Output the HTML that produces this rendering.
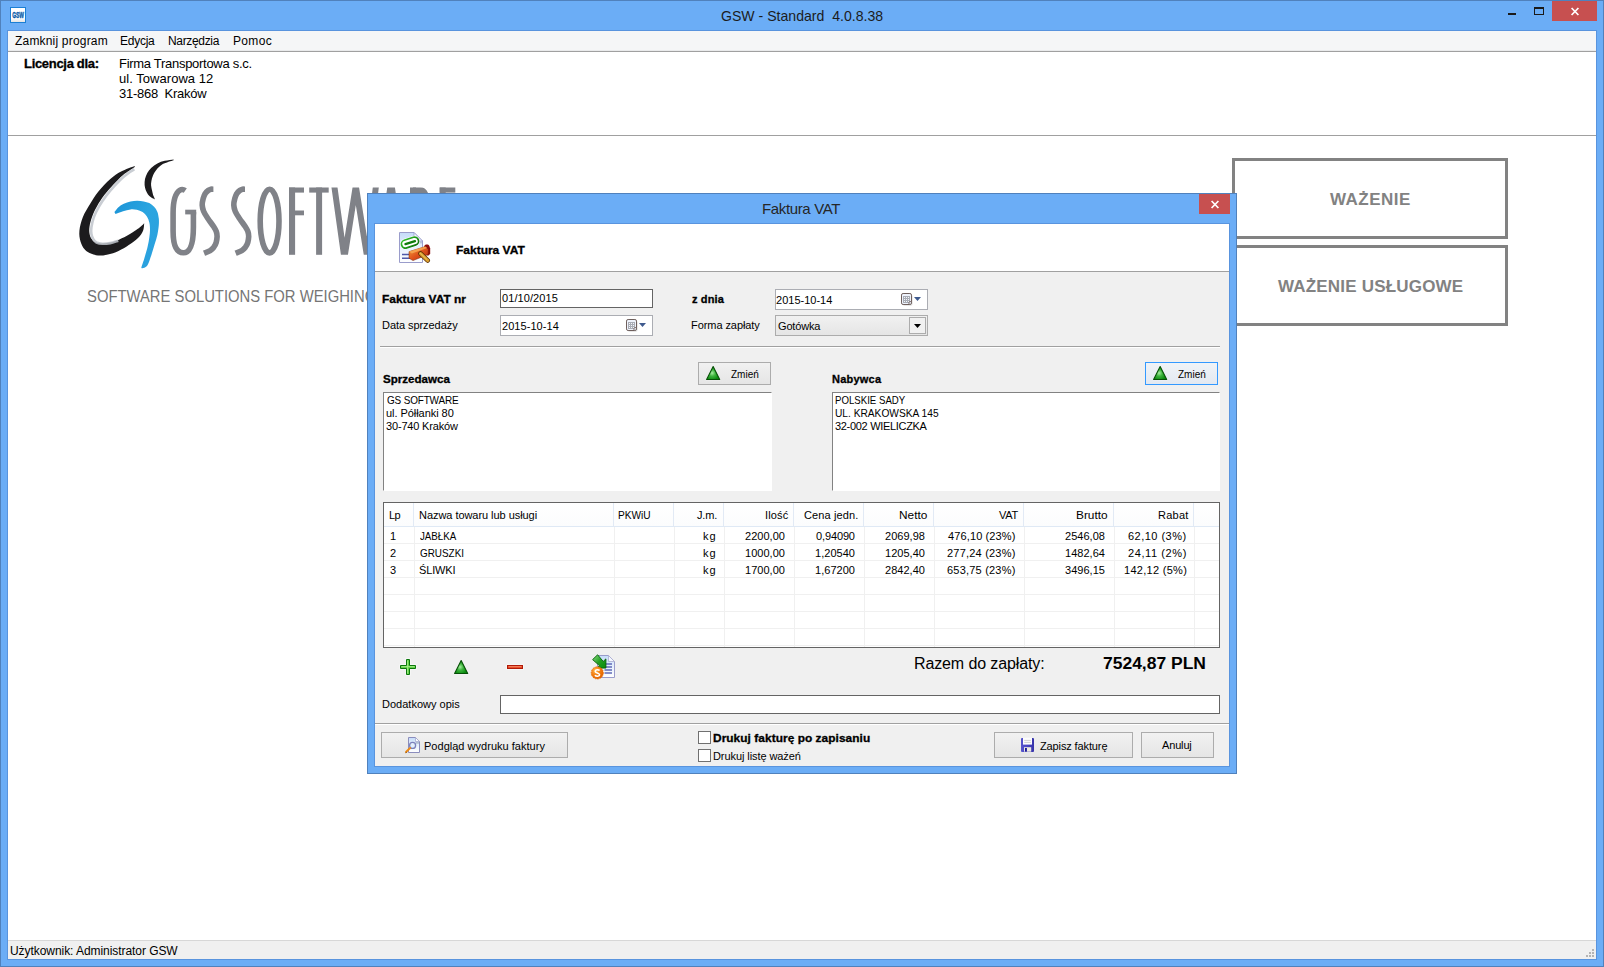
<!DOCTYPE html>
<html>
<head>
<meta charset="utf-8">
<title>GSW - Standard 4.0.8.38</title>
<style>
*{box-sizing:border-box;margin:0;padding:0}
html,body{width:1604px;height:967px;overflow:hidden}
body{position:relative;background:#6badf6;font-family:"Liberation Sans",sans-serif;font-size:11px;color:#000}
.a{position:absolute}
.t{position:absolute;white-space:nowrap}
svg{position:absolute;overflow:visible}
.inp{background:#fff;border:1px solid #abadb3}
.dk{background:#fff;border:1px solid #646464}
.btn{border:1px solid #acacac;background:linear-gradient(#f1f1f1,#e5e5e5)}
.sunk{background:#fff;border:1px solid #fff;border-top-color:#828282;border-left-color:#828282}
.cb{width:13px;height:13px;background:#fff;border:1px solid #707070}
.hl{height:2px;border-top:1px solid #a0a0a0;border-bottom:1px solid #fff}
.vl{width:1px;background:#f0f0f0}
.rl{height:1px;background:#f0f0f0}
</style>
</head>
<body>

<!-- main window frame -->
<div class="a" style="left:0;top:0;width:1604px;height:967px;border:1px solid #5081bc"></div>
<div class="a" style="left:7px;top:30px;width:1590px;height:930px;background:#5994de"></div>
<div class="a" style="left:8px;top:31px;width:1588px;height:928px;background:#fff"></div>
<!-- app icon -->
<div class="a" style="left:10px;top:7px;width:16px;height:16px;background:linear-gradient(#fff 70%,#e4e4e4);border:1px solid #1b7fd4"></div>
<svg style="left:10px;top:7px" width="16" height="16" viewBox="0 0 16 16"><text x="2.2" y="11" font-family="Liberation Sans" font-weight="bold" font-size="8.8" fill="#0a5ba8" stroke="#0a5ba8" stroke-width=".4" textLength="11.8" lengthAdjust="spacingAndGlyphs">GSW</text></svg>
<!-- caption buttons -->
<div class="a" style="left:1508px;top:13px;width:8px;height:2px;background:#1a1a1a"></div>
<div class="a" style="left:1534px;top:7px;width:10px;height:8px;border:1px solid #1a1a1a;border-top-width:2px"></div>
<div class="a" style="left:1552px;top:1px;width:45px;height:20px;background:#c75050"></div>
<svg style="left:1571px;top:8px" width="8" height="7" viewBox="0 0 8 7"><path d="M0.6 0L7.4 7M7.4 0L0.6 7" stroke="#fff" stroke-width="1.7" fill="none"/></svg>
<!-- menu -->
<div class="a" style="left:8px;top:31px;width:1588px;height:21px;background:#f5f6f7;border-bottom:1px solid #a0a0a0"></div>
<div class="a" style="left:8px;top:50px;width:1588px;height:1px;background:#e9eaeb"></div>
<!-- licence panel bottom line -->
<div class="a" style="left:8px;top:135px;width:1588px;height:1px;background:#a0a0a0"></div>
<!-- status bar -->
<div class="a" style="left:8px;top:940px;width:1588px;height:19px;background:#f0f0f0;border-top:1px solid #d7d7d7"></div>
<svg style="left:1586px;top:949px" width="9" height="9" viewBox="0 0 9 9" fill="#b4b4b4"><rect x="6" y="0" width="2" height="2"/><rect x="3" y="3" width="2" height="2"/><rect x="6" y="3" width="2" height="2"/><rect x="0" y="6" width="2" height="2"/><rect x="3" y="6" width="2" height="2"/><rect x="6" y="6" width="2" height="2"/></svg>
<!-- big buttons -->
<div class="a" style="left:1232px;top:158px;width:276px;height:81px;border:3px solid #828282;background:#fff"></div>
<div class="a" style="left:1232px;top:245px;width:276px;height:81px;border:3px solid #828282;background:#fff"></div>

<svg style="left:0;top:0" width="480" height="290" viewBox="0 0 480 290">
<defs><linearGradient id="lb" x1="0" y1="0" x2="1" y2="1"><stop offset="0" stop-color="#1b93d6"/><stop offset=".45" stop-color="#2ba5e0"/><stop offset="1" stop-color="#2a9fdd"/></linearGradient><clipPath id="lc"><rect x="160" y="186.6" width="320" height="69"/></clipPath></defs>
<path d="M134.6 165.9C132.3 166.8 125.1 169.3 121.1 171.5C117.1 173.7 114.2 175.6 110.3 178.9C106.5 182.3 101.6 187.5 98.2 191.7C94.9 195.8 92.7 199.5 90.2 203.8C87.6 208.1 84.6 212.8 82.8 217.2C81.0 221.7 79.8 226.7 79.4 230.7C79.0 234.7 79.6 238.3 80.5 241.4C81.4 244.6 83.0 247.5 84.8 249.5C86.6 251.6 88.8 252.8 91.5 253.8C94.2 254.8 97.3 255.7 100.9 255.6C104.5 255.5 109.2 254.5 113.0 253.3C116.8 252.0 120.4 250.0 123.8 248.2C127.2 246.3 130.5 244.1 133.2 242.1C135.9 240.1 138.2 238.1 139.9 236.1C141.6 234.1 142.6 232.1 143.3 230.0C144.0 227.9 144.1 224.4 144.2 223.3L143.7 223.7C143.1 224.3 141.5 226.1 139.9 227.3C138.4 228.6 136.8 229.6 134.6 231.1C132.3 232.5 129.4 234.5 126.5 236.1C123.6 237.6 120.0 239.3 117.1 240.4C114.2 241.5 111.7 242.3 109.0 242.8C106.3 243.3 103.3 243.6 100.9 243.5C98.6 243.4 96.4 242.9 94.9 242.1C93.3 241.3 92.4 240.2 91.5 238.8C90.6 237.3 89.8 235.4 89.5 233.4C89.2 231.4 89.1 229.5 89.5 226.7C89.9 223.9 91.0 219.9 92.2 216.6C93.4 213.2 94.9 210.1 96.9 206.5C98.9 202.9 101.6 198.6 104.3 195.1C107.0 191.5 109.9 188.3 113.0 185.0C116.2 181.6 119.5 177.9 123.1 174.9C126.8 171.9 132.9 168.3 134.8 166.9Z" fill="#1c1b1d"/>
<path d="M134.4 169.2C132.7 170.0 127.6 173.3 124.3 176.2C121.0 179.0 117.6 182.5 114.5 185.8C111.4 189.2 108.6 192.5 105.9 196.1C103.2 199.6 100.5 203.8 98.5 207.4C96.5 210.9 95.0 214.1 93.8 217.4C92.6 220.8 91.8 224.5 91.4 227.3C91.0 230.0 91.1 232.0 91.4 234.0C91.7 236.0 92.4 237.7 93.3 239.1C94.1 240.5 95.0 241.7 96.5 242.5C98.0 243.2 100.1 243.7 102.4 243.8C104.7 243.9 107.6 243.6 110.2 243.1C112.8 242.6 116.9 241.1 118.3 240.7" fill="none" stroke="#bfc4cb" stroke-width="2.6" opacity=".85"/>
<path d="M173.6 159.4C172.1 159.6 167.5 160.1 164.8 160.8C162.1 161.4 159.7 162.3 157.4 163.4C155.2 164.6 153.0 166.2 151.4 167.8C149.7 169.3 148.4 171.0 147.3 172.9C146.3 174.7 145.5 176.9 145.0 178.9C144.6 180.9 144.5 183.1 144.6 185.0C144.7 186.8 145.2 188.5 145.7 190.1C146.3 191.6 147.1 193.2 148.0 194.4C148.9 195.6 149.8 196.5 151.0 197.3C152.1 198.2 154.3 199.0 155.0 199.4L154.7 198.7C154.5 198.1 153.6 196.4 153.1 195.1C152.7 193.7 152.4 191.9 152.0 190.3C151.7 188.8 151.2 187.2 151.1 185.6C151.0 184.1 151.0 182.6 151.4 180.9C151.7 179.2 152.2 177.3 153.0 175.6C153.8 173.8 154.4 172.1 156.1 170.2C157.7 168.3 159.9 165.8 162.8 164.1C165.7 162.5 171.8 160.9 173.6 160.2Z" fill="#1c1b1d"/>
<path d="M114.4 212.1C115.1 211.3 116.8 208.5 118.4 207.2C120.0 205.8 121.8 204.7 123.8 203.8C125.8 202.9 128.3 202.1 130.5 201.6C132.8 201.1 135.0 200.9 137.2 200.8C139.4 200.8 141.7 201.0 143.7 201.4C145.7 201.8 147.6 202.2 149.3 203.1C151.1 204.0 152.7 205.3 154.1 206.8C155.4 208.2 156.6 209.9 157.4 211.9C158.2 213.8 158.5 216.3 158.8 218.6C159.0 220.8 159.0 222.6 158.8 225.3C158.5 228.0 158.1 231.6 157.4 234.7C156.7 237.9 155.7 240.8 154.7 244.1C153.7 247.5 152.5 251.5 151.4 254.9C150.2 258.3 149.0 262.2 148.0 264.3C147.0 266.4 146.4 266.6 145.3 267.3C144.3 267.9 142.3 268.2 141.7 268.3L141.3 267.8C141.6 266.8 142.6 263.8 143.3 261.6C144.0 259.5 144.6 257.5 145.3 254.9C146.0 252.3 147.1 249.1 147.7 246.2C148.4 243.2 149.0 240.1 149.3 237.4C149.7 234.7 150.0 232.5 150.0 230.0C150.0 227.6 149.9 224.9 149.3 222.6C148.8 220.4 148.0 218.3 146.9 216.6C145.8 214.8 144.3 213.3 142.6 212.1C140.9 211.0 138.9 210.3 136.8 209.8C134.8 209.4 132.8 209.2 130.5 209.4C128.2 209.7 125.6 210.4 123.1 211.2C120.6 212.0 116.7 213.5 115.5 214.0Z" fill="url(#lb)"/>
<g fill="none" stroke="#808288" stroke-width="5.6"><path d="M185.3 190.5C183.6 189.4 181.4 189.2 179.8 190.3C176 192.8 173.1 200 173.1 213V231C173.1 246 177 252.8 183.4 252.8C190 252.8 193.4 244.5 193.4 227V212.1M213.4 189.3C213.0 189.3 211.8 189.0 211.0 189.2C210.2 189.4 209.3 189.7 208.3 190.4C207.3 191.1 206.0 192.2 205.2 193.6C204.3 194.9 203.7 196.6 203.2 198.5C202.7 200.4 202.1 202.9 202.2 205.0C202.3 207.1 202.7 209.0 203.6 211.2C204.5 213.4 206.0 215.6 207.7 218.2C209.4 220.8 212.2 224.4 213.6 226.6C215.0 228.8 215.7 229.8 216.3 231.5C216.9 233.2 217.1 234.7 217.1 236.5C217.0 238.3 216.7 240.7 216.2 242.5C215.7 244.3 214.8 245.8 213.8 247.2C212.8 248.5 211.8 249.6 210.2 250.6C208.6 251.6 205.0 252.8 204.0 253.2M245.0 189.3C244.6 189.3 243.4 189.0 242.6 189.2C241.8 189.4 240.9 189.7 239.9 190.4C238.9 191.1 237.6 192.2 236.8 193.6C235.9 194.9 235.3 196.6 234.8 198.5C234.3 200.4 233.7 202.9 233.8 205.0C233.9 207.1 234.3 209.0 235.2 211.2C236.1 213.4 237.6 215.6 239.3 218.2C241.0 220.8 243.8 224.4 245.2 226.6C246.6 228.8 247.3 229.8 247.9 231.5C248.5 233.2 248.7 234.7 248.7 236.5C248.6 238.3 248.3 240.7 247.8 242.5C247.3 244.3 246.4 245.8 245.4 247.2C244.4 248.5 243.4 249.6 241.8 250.6C240.2 251.6 236.6 252.8 235.6 253.2"/><ellipse cx="269.6" cy="221.1" rx="9.4" ry="31.8"/></g>
<g fill="#808288"><rect x="185.2" y="209.7" width="11.0" height="4.7"/><rect x="289.0" y="187.5" width="6.1" height="67.3"/><rect x="289.0" y="187.5" width="15.0" height="5.1"/><rect x="289.0" y="210.5" width="15.0" height="4.8"/><rect x="309.2" y="187.5" width="19.5" height="5.1"/><rect x="316.1" y="187.5" width="6.0" height="67.3"/><rect x="410.0" y="187.5" width="6.0" height="67.3"/><rect x="439.7" y="187.5" width="6.0" height="67.3"/><rect x="439.7" y="187.5" width="15.6" height="5.1"/><rect x="439.7" y="210.5" width="14.5" height="4.8"/><rect x="439.7" y="249.7" width="15.6" height="5.1"/></g>
<defs><clipPath id="lc2"><rect x="160" y="187.5" width="320" height="67.3"/></clipPath></defs>
<g clip-path="url(#lc2)" fill="none" stroke="#808288" stroke-width="6" stroke-linejoin="miter" stroke-miterlimit="10"><path d="M334 184L344.4 258L355.8 186L367.3 258L376.2 184M380 258L391.1 182L402.2 258M413 190H420C429.5 190 429.5 217 420 217H413M420 217L428 258"/></g>
</svg>

<div class="t" style="left:721px;top:7px;font-size:15px;line-height:18px;color:#1c1c1c;transform:scaleX(0.939);transform-origin:0 0;">GSW - Standard&nbsp; 4.0.8.38</div>
<div class="t" style="left:15px;top:34px;font-size:12px;line-height:15px;letter-spacing:0.19px;">Zamknij program</div>
<div class="t" style="left:120px;top:34px;font-size:12px;line-height:15px;letter-spacing:-0.26px;">Edycja</div>
<div class="t" style="left:168px;top:34px;font-size:12px;line-height:15px;letter-spacing:-0.33px;">Narzędzia</div>
<div class="t" style="left:233px;top:34px;font-size:12px;line-height:15px;letter-spacing:0.32px;">Pomoc</div>
<div class="t" style="left:24px;top:56px;font-size:13px;line-height:16px;font-weight:bold;-webkit-text-stroke:.3px;letter-spacing:-0.31px;">Licencja dla:</div>
<div class="t" style="left:119px;top:56px;font-size:13px;line-height:16px;letter-spacing:-0.29px;">Firma Transportowa s.c.</div>
<div class="t" style="left:119px;top:71px;font-size:13px;line-height:16px;letter-spacing:0.04px;">ul. Towarowa 12</div>
<div class="t" style="left:119px;top:86px;font-size:13px;line-height:16px;letter-spacing:-0.27px;">31-868&nbsp; Kraków</div>
<div class="t" style="left:10px;top:944px;font-size:12px;line-height:15px;letter-spacing:-0.06px;">Użytkownik: Administrator GSW</div>
<div class="t" style="left:1330px;top:190px;font-size:17px;line-height:20px;font-weight:bold;color:#828282;letter-spacing:0.47px;">WAŻENIE</div>
<div class="t" style="left:1278px;top:277px;font-size:17px;line-height:20px;font-weight:bold;color:#828282;letter-spacing:0.19px;">WAŻENIE USŁUGOWE</div>
<div class="t" style="left:87px;top:287px;font-size:16px;line-height:19px;color:#757575;transform:scaleX(0.926);transform-origin:0 0;">SOFTWARE SOLUTIONS FOR WEIGHING INDUSTRY</div>
<!-- dialog frame -->
<div class="a" style="left:367px;top:193px;width:870px;height:581px;background:#6badf6;border:1px solid #5081bc"></div>
<div class="a" style="left:374px;top:223px;width:856px;height:544px;background:#5994de"></div>
<div class="a" style="left:375px;top:224px;width:854px;height:542px;background:#f0f0f0"></div>
<div class="a" style="left:1199px;top:194px;width:31px;height:20px;background:#c75050"></div>
<svg style="left:1211px;top:201px" width="8" height="7" viewBox="0 0 8 7"><path d="M0.6 0L7.4 7M7.4 0L0.6 7" stroke="#fff" stroke-width="1.7" fill="none"/></svg>
<!-- header -->
<div class="a" style="left:375px;top:224px;width:854px;height:48px;background:#fff;border-bottom:1px solid #a0a0a0"></div>
<!-- form row 1/2 -->
<div class="a dk" style="left:500px;top:289px;width:153px;height:19px"></div>
<div class="a inp" style="left:775px;top:289px;width:153px;height:21px"></div>
<div class="a inp" style="left:500px;top:315px;width:153px;height:21px"></div>
<div class="a btn" style="left:775px;top:315px;width:153px;height:21px"></div>
<div class="a" style="left:909px;top:317px;width:17px;height:17px;border:1px solid #acacac;background:#f1f1f1"></div>
<svg style="left:914px;top:324px" width="7" height="4" viewBox="0 0 7 4"><path d="M0 0H7L3.5 4Z" fill="#000"/></svg>
<div class="a hl" style="left:380px;top:346px;width:840px"></div>
<!-- sprzedawca / nabywca -->
<div class="a btn" style="left:698px;top:362px;width:73px;height:23px"></div>
<div class="a btn" style="left:1145px;top:362px;width:73px;height:23px;border-color:#3399ff;background:linear-gradient(#f0f3f7,#e3e9f1)"></div>
<div class="a sunk" style="left:383px;top:392px;width:389px;height:99px"></div>
<div class="a sunk" style="left:832px;top:392px;width:388px;height:99px"></div>
<!-- grid -->
<div class="a" style="left:383px;top:502px;width:837px;height:146px;background:#fff;border:1px solid #646464"></div>
<div class="a" style="left:384px;top:503px;width:835px;height:24px;background:linear-gradient(#ffffff,#fbfcfd);border-bottom:1px solid #dfe9f5"></div>
<!-- separator + bottom -->
<div class="a dk" style="left:500px;top:695px;width:720px;height:19px"></div>
<div class="a hl" style="left:375px;top:723px;width:854px"></div>
<div class="a btn" style="left:381px;top:732px;width:187px;height:26px"></div>
<div class="a btn" style="left:994px;top:732px;width:139px;height:26px"></div>
<div class="a btn" style="left:1141px;top:732px;width:73px;height:26px"></div>
<div class="a cb" style="left:698px;top:731px"></div>
<div class="a cb" style="left:698px;top:749px"></div>

<div class="a" style="left:413px;top:503px;width:1px;height:23px;background:#e2eaf5"></div>
<div class="a vl" style="left:414px;top:527px;height:120px"></div>
<div class="a" style="left:613px;top:503px;width:1px;height:23px;background:#e2eaf5"></div>
<div class="a vl" style="left:614px;top:527px;height:120px"></div>
<div class="a" style="left:673px;top:503px;width:1px;height:23px;background:#e2eaf5"></div>
<div class="a vl" style="left:674px;top:527px;height:120px"></div>
<div class="a" style="left:723px;top:503px;width:1px;height:23px;background:#e2eaf5"></div>
<div class="a vl" style="left:724px;top:527px;height:120px"></div>
<div class="a" style="left:793px;top:503px;width:1px;height:23px;background:#e2eaf5"></div>
<div class="a vl" style="left:794px;top:527px;height:120px"></div>
<div class="a" style="left:863px;top:503px;width:1px;height:23px;background:#e2eaf5"></div>
<div class="a vl" style="left:864px;top:527px;height:120px"></div>
<div class="a" style="left:933px;top:503px;width:1px;height:23px;background:#e2eaf5"></div>
<div class="a vl" style="left:934px;top:527px;height:120px"></div>
<div class="a" style="left:1023px;top:503px;width:1px;height:23px;background:#e2eaf5"></div>
<div class="a vl" style="left:1024px;top:527px;height:120px"></div>
<div class="a" style="left:1113px;top:503px;width:1px;height:23px;background:#e2eaf5"></div>
<div class="a vl" style="left:1114px;top:527px;height:120px"></div>
<div class="a" style="left:1193px;top:503px;width:1px;height:23px;background:#e2eaf5"></div>
<div class="a vl" style="left:1194px;top:527px;height:120px"></div>
<div class="a rl" style="left:384px;top:543px;width:835px"></div>
<div class="a rl" style="left:384px;top:560px;width:835px"></div>
<div class="a rl" style="left:384px;top:577px;width:835px"></div>
<div class="a rl" style="left:384px;top:594px;width:835px"></div>
<div class="a rl" style="left:384px;top:611px;width:835px"></div>
<div class="a rl" style="left:384px;top:628px;width:835px"></div>
<div class="a rl" style="left:384px;top:645px;width:835px"></div>
<svg style="left:0;top:0" width="1604" height="967" viewBox="0 0 1604 967">
<defs>
<radialGradient id="tg" cx=".42" cy=".5" r=".55"><stop offset="0" stop-color="#a6eba0"/><stop offset=".45" stop-color="#3db53d"/><stop offset="1" stop-color="#0c8a10"/></radialGradient>
<linearGradient id="pg" x1="0" y1="0" x2="0" y2="1"><stop offset="0" stop-color="#c5dcf9"/><stop offset=".5" stop-color="#e6f0fd"/><stop offset="1" stop-color="#ffffff"/></linearGradient>
<radialGradient id="og" cx=".35" cy=".3" r=".8"><stop offset="0" stop-color="#ffb84a"/><stop offset=".5" stop-color="#f47c10"/><stop offset="1" stop-color="#d95e00"/></radialGradient>
<linearGradient id="rg" x1="0" y1="0" x2="1" y2="1"><stop offset="0" stop-color="#f0a040"/><stop offset=".5" stop-color="#e0541c"/><stop offset="1" stop-color="#b52810"/></linearGradient>
<linearGradient id="ag" x1="0" y1="0" x2="1" y2="1"><stop offset="0" stop-color="#8fe08a"/><stop offset=".5" stop-color="#22a022"/><stop offset="1" stop-color="#0a8a0a"/></linearGradient>
<linearGradient id="fg" x1="0" y1="0" x2="1" y2="0"><stop offset="0" stop-color="#5654cc"/><stop offset=".5" stop-color="#4845c2"/><stop offset="1" stop-color="#3633a8"/></linearGradient>
<linearGradient id="cg" x1="0" y1="0" x2="1" y2="1"><stop offset="0" stop-color="#35c02c"/><stop offset=".5" stop-color="#1f9a1a"/><stop offset="1" stop-color="#0a6c0a"/></linearGradient>


</defs>
<!-- header icon: document + paperclip + stamp -->
<path d="M399.5 232.5H414L422.5 241V262.5H399.5Z" fill="url(#pg)" stroke="#9a9ccb"/>
<path d="M414 232.5V241H422.5Z" fill="#f4f8ff" stroke="#9a9ccb" stroke-width=".8"/>
<path d="M416 241.6H422V243.4H416Z" fill="#8e9aae" opacity=".45"/>
<path d="M402 254.5H410M402 258.3H410" stroke="#4f5aa8" stroke-width="1.5"/>
<g transform="rotate(-18 410 242.6)"><rect x="401.2" y="238.6" width="17.6" height="8" rx="4" fill="#fff" stroke="#fff" stroke-width="2.6"/><rect x="401.2" y="238.6" width="17.6" height="8" rx="4" fill="#fff" stroke="url(#cg)" stroke-width="1.7"/><path d="M405.2 242.7H415.2" stroke="#0f7d0c" stroke-width="2.3" stroke-linecap="round"/></g>
<path d="M424.2 246.2C424.6 244.2 428.4 243.8 429.4 246L430.2 248.5V253.2C429.6 255.4 427.6 256 426.6 255.2Z" fill="#8f0d0b"/>
<path d="M409 251.6L425.2 246.6L428.2 249.2V254.4L413 260.6L409 258.2Z" fill="url(#rg)" stroke="#7a2408" stroke-width=".5"/>
<path d="M409 251.6L425.2 246.6L427.2 248L411.8 253.4Z" fill="#f6a450" opacity=".9"/>
<path d="M420.6 253.6L427.6 260.4" stroke="#5e3206" stroke-width="4.8" stroke-linecap="round"/>
<path d="M420.6 253.6L427.6 260.4" stroke="#dba030" stroke-width="3.2" stroke-linecap="round"/>
<path d="M420.2 253L426.8 259.4" stroke="#f3cc6a" stroke-width="1" stroke-linecap="round" opacity=".8"/>
<!-- date pickers -->
<g transform="translate(626,319)"><rect x="1.6" y="1.8" width="10" height="11" rx="2" fill="#000" opacity=".13"/><rect x=".5" y=".5" width="10" height="11" rx="1.6" fill="#eef2fb" stroke="#6e5f5c"/><rect x="2" y="3" width="7" height="7" fill="#a9adb6"/><g fill="#f4f6fa"><rect x="3" y="4" width="1" height="1"/><rect x="5" y="4" width="1" height="1"/><rect x="7" y="4" width="1" height="1"/><rect x="3" y="6" width="1" height="1"/><rect x="5" y="6" width="1" height="1"/><rect x="7" y="6" width="1" height="1"/><rect x="3" y="8" width="1" height="1"/><rect x="5" y="8" width="1" height="1"/><rect x="7" y="8" width="1" height="1"/></g><path d="M8 11.5V9.6Q8 8.6 9 8.6H10.5" fill="#eef2fb" stroke="#6e5f5c" stroke-width=".9"/></g><path d="M639 323H646L642.5 327Z" fill="#3e5a8e"/>
<g transform="translate(901,293)"><rect x="1.6" y="1.8" width="10" height="11" rx="2" fill="#000" opacity=".13"/><rect x=".5" y=".5" width="10" height="11" rx="1.6" fill="#eef2fb" stroke="#6e5f5c"/><rect x="2" y="3" width="7" height="7" fill="#a9adb6"/><g fill="#f4f6fa"><rect x="3" y="4" width="1" height="1"/><rect x="5" y="4" width="1" height="1"/><rect x="7" y="4" width="1" height="1"/><rect x="3" y="6" width="1" height="1"/><rect x="5" y="6" width="1" height="1"/><rect x="7" y="6" width="1" height="1"/><rect x="3" y="8" width="1" height="1"/><rect x="5" y="8" width="1" height="1"/><rect x="7" y="8" width="1" height="1"/></g><path d="M8 11.5V9.6Q8 8.6 9 8.6H10.5" fill="#eef2fb" stroke="#6e5f5c" stroke-width=".9"/></g><path d="M914 297H921L917.5 301Z" fill="#3e5a8e"/>
<!-- triangles -->
<g transform="translate(706,366)"><path d="M7.15 -0.3L14.6 14.3H-0.3Z" fill="#fff" opacity=".7"/><path d="M7.15 0.5L13.7 13.5H0.6Z" fill="url(#tg)" stroke="#064f06" stroke-width="1.1" stroke-linejoin="round"/></g><g transform="translate(1153,366)"><path d="M7.15 -0.3L14.6 14.3H-0.3Z" fill="#fff" opacity=".7"/><path d="M7.15 0.5L13.7 13.5H0.6Z" fill="url(#tg)" stroke="#064f06" stroke-width="1.1" stroke-linejoin="round"/></g><g transform="translate(454,660)"><path d="M7.15 -0.3L14.6 14.3H-0.3Z" fill="#fff" opacity=".7"/><path d="M7.15 0.5L13.7 13.5H0.6Z" fill="url(#tg)" stroke="#064f06" stroke-width="1.1" stroke-linejoin="round"/></g>
<!-- plus -->
<path d="M405.5 658.5h5v6h6v5h-6v6h-5v-6h-6v-5h6z" fill="#fff" opacity=".75"/>
<path d="M406.5 659.5h3v6h6v3h-6v6h-3v-6h-6v-3h6z" fill="#5fd244" stroke="#0b760b" stroke-width="1"/>
<path d="M407.6 660.5v13M401.5 666.6h13" stroke="#bdf5a2" stroke-width=".8" opacity=".85"/>
<!-- minus -->
<rect x="506.5" y="664.5" width="17" height="5" fill="#fff" opacity=".75"/>
<rect x="507.5" y="665.5" width="15" height="3" fill="#e6401c" stroke="#b01a08" stroke-width="1"/>
<path d="M508.5 666.7h13" stroke="#f9a080" stroke-width=".8"/>
<!-- invoice icon: page + green arrow + coin -->
<path d="M597.5 655.5H608.5L614.5 661.5V677.5H597.5Z" fill="url(#pg)" stroke="#9a9ccb"/>
<path d="M608.5 655.5V661.5H614.5Z" fill="#f4f8ff" stroke="#a9abcf" stroke-width=".8"/>
<path d="M604.5 664h7.5M604.5 667h7.5M604.5 670h7.5M604.5 673h7.5" stroke="#5f6ab6" stroke-width="1.3"/>
<path d="M597.6 654.8L592.6 659.6L599.4 665.6L596.8 668.1H605.9V658.9L603.2 661.4Z" fill="url(#ag)" stroke="#066006" stroke-width=".9" stroke-linejoin="round"/>
<circle cx="597.3" cy="672.9" r="6.1" fill="url(#og)"/><circle cx="597.3" cy="672.9" r="6.1" fill="none" stroke="#e66a00" stroke-width=".8" stroke-dasharray="1.6 1"/>
<path d="M599.6 670.6C598.6 669.3 595.2 669.4 595.2 671.2C595.2 673.2 599.6 672.6 599.6 674.8C599.6 676.6 596 676.6 594.9 675.2" fill="none" stroke="#fff" stroke-width="1.6"/>
<!-- preview icon -->
<path d="M408.5 737.5H415.5L419.5 741.5V752.5H408.5Z" fill="url(#pg)" stroke="#8b8dbd"/>
<path d="M415.5 737.5V741.5H419.5Z" fill="#fbfdff" stroke="#9fa1c9" stroke-width=".7"/>
<path d="M415.7 742.2H419V743.6H415.7Z" fill="#8e9aae" opacity=".7"/>
<circle cx="412.6" cy="745.4" r="3" fill="#e4f0fc" stroke="#7b80bb" stroke-width="1.3"/>
<path d="M410.1 748L406 752" stroke="#ee8a14" stroke-width="1.9" stroke-linecap="round"/>
<path d="M405.6 752.8L406.8 752.2" stroke="#5a3a10" stroke-width=".8"/>
<!-- floppy -->
<rect x="1021" y="738" width="13" height="14" rx="1" fill="url(#fg)"/>
<rect x="1023" y="737.7" width="9" height="6.9" fill="#fcfcfd"/>
<path d="M1024.2 740.4H1030.8M1024.2 742.4H1030.8" stroke="#c4c4c6" stroke-width=".8"/>
<rect x="1024" y="747.2" width="7.2" height="4.5" fill="#ece9df"/><rect x="1025" y="748" width="1.9" height="3.7" fill="#1c1a9c"/>
</svg>

<div class="t" style="left:762px;top:200px;font-size:15px;line-height:18px;color:#262626;letter-spacing:-0.36px;">Faktura VAT</div>
<div class="t" style="left:456px;top:243px;font-size:11px;line-height:14px;font-weight:bold;-webkit-text-stroke:.3px;transform:scaleX(1.089);transform-origin:0 0;">Faktura VAT</div>
<div class="t" style="left:382px;top:292px;font-size:11px;line-height:14px;font-weight:bold;-webkit-text-stroke:.3px;transform:scaleX(1.088);transform-origin:0 0;">Faktura VAT nr</div>
<div class="t" style="left:692px;top:292px;font-size:11px;line-height:14px;font-weight:bold;-webkit-text-stroke:.3px;letter-spacing:0.12px;">z dnia</div>
<div class="t" style="left:382px;top:318px;font-size:11px;line-height:14px;letter-spacing:-0.06px;">Data sprzedaży</div>
<div class="t" style="left:691px;top:318px;font-size:11px;line-height:14px;letter-spacing:-0.07px;">Forma zapłaty</div>
<div class="t" style="left:502px;top:291px;font-size:11px;line-height:14px;letter-spacing:0.09px;">01/10/2015</div>
<div class="t" style="left:502px;top:319px;font-size:11px;line-height:14px;letter-spacing:0.06px;">2015-10-14</div>
<div class="t" style="left:776px;top:293px;font-size:11px;line-height:14px;letter-spacing:0.01px;">2015-10-14</div>
<div class="t" style="left:778px;top:319px;font-size:11px;line-height:14px;letter-spacing:-0.17px;">Gotówka</div>
<div class="t" style="left:383px;top:372px;font-size:11px;line-height:14px;font-weight:bold;-webkit-text-stroke:.3px;transform:scaleX(1.053);transform-origin:0 0;">Sprzedawca</div>
<div class="t" style="left:832px;top:372px;font-size:11px;line-height:14px;font-weight:bold;-webkit-text-stroke:.3px;letter-spacing:0.23px;">Nabywca</div>
<div class="t" style="left:731px;top:367px;font-size:11px;line-height:14px;transform:scaleX(0.910);transform-origin:0 0;">Zmień</div>
<div class="t" style="left:1178px;top:367px;font-size:11px;line-height:14px;transform:scaleX(0.910);transform-origin:0 0;">Zmień</div>
<div class="t" style="left:387px;top:393px;font-size:11px;line-height:14px;letter-spacing:-0.17px;transform:scaleX(0.905);transform-origin:0 0;">GS SOFTWARE</div>
<div class="t" style="left:386px;top:406px;font-size:11px;line-height:14px;letter-spacing:-0.05px;">ul. Półłanki 80</div>
<div class="t" style="left:386px;top:419px;font-size:11px;line-height:14px;letter-spacing:-0.17px;">30-740 Kraków</div>
<div class="t" style="left:835px;top:393px;font-size:11px;line-height:14px;transform:scaleX(0.877);transform-origin:0 0;">POLSKIE SADY</div>
<div class="t" style="left:835px;top:406px;font-size:11px;line-height:14px;transform:scaleX(0.926);transform-origin:0 0;">UL. KRAKOWSKA 145</div>
<div class="t" style="left:835px;top:419px;font-size:11px;line-height:14px;letter-spacing:-0.31px;">32-002 WIELICZKA</div>
<div class="t" style="left:389px;top:508px;font-size:11px;line-height:14px;letter-spacing:-0.60px;">Lp</div>
<div class="t" style="left:419px;top:508px;font-size:11px;line-height:14px;letter-spacing:-0.05px;">Nazwa towaru lub usługi</div>
<div class="t" style="left:618px;top:508px;font-size:11px;line-height:14px;transform:scaleX(0.921);transform-origin:0 0;">PKWiU</div>
<div class="t" style="left:697px;top:508px;font-size:11px;line-height:14px;letter-spacing:-0.17px;">J.m.</div>
<div class="t" style="left:765px;top:508px;font-size:11px;line-height:14px;letter-spacing:0.15px;">Ilość</div>
<div class="t" style="left:804px;top:508px;font-size:11px;line-height:14px;letter-spacing:0.12px;">Cena jedn.</div>
<div class="t" style="left:899px;top:508px;font-size:11px;line-height:14px;transform:scaleX(1.076);transform-origin:0 0;">Netto</div>
<div class="t" style="left:999px;top:508px;font-size:11px;line-height:14px;letter-spacing:-0.30px;">VAT</div>
<div class="t" style="left:1076px;top:508px;font-size:11px;line-height:14px;transform:scaleX(1.079);transform-origin:0 0;">Brutto</div>
<div class="t" style="left:1158px;top:508px;font-size:11px;line-height:14px;letter-spacing:0.25px;">Rabat</div>
<div class="t" style="left:914px;top:654px;font-size:16px;line-height:19px;letter-spacing:-0.12px;">Razem do zapłaty:</div>
<div class="t" style="left:1103px;top:654px;font-size:16px;line-height:19px;font-weight:bold;transform:scaleX(1.092);transform-origin:0 0;">7524,87 PLN</div>
<div class="t" style="left:382px;top:697px;font-size:11px;line-height:14px;letter-spacing:0.01px;">Dodatkowy opis</div>
<div class="t" style="left:424px;top:739px;font-size:11px;line-height:14px;letter-spacing:0.02px;">Podgląd wydruku faktury</div>
<div class="t" style="left:713px;top:731px;font-size:11px;line-height:14px;font-weight:bold;-webkit-text-stroke:.3px;letter-spacing:0.05px;transform:scaleX(1.080);transform-origin:0 0;">Drukuj fakturę po zapisaniu</div>
<div class="t" style="left:713px;top:749px;font-size:11px;line-height:14px;letter-spacing:-0.08px;">Drukuj listę ważeń</div>
<div class="t" style="left:1040px;top:739px;font-size:11px;line-height:14px;letter-spacing:-0.12px;">Zapisz fakturę</div>
<div class="t" style="left:1162px;top:738px;font-size:11px;line-height:14px;letter-spacing:-0.16px;">Anuluj</div>
<div class="t" style="left:390px;top:529px;font-size:11px;line-height:14px;">1</div>
<div class="t" style="left:420px;top:529px;font-size:11px;line-height:14px;transform:scaleX(0.885);transform-origin:0 0;">JABŁKA</div>
<div class="t" style="left:703px;top:529px;font-size:11px;line-height:14px;letter-spacing:0.90px;">kg</div>
<div class="t" style="left:745px;top:529px;font-size:11px;line-height:14px;letter-spacing:0.03px;">2200,00</div>
<div class="t" style="left:816px;top:529px;font-size:11px;line-height:14px;letter-spacing:-0.13px;">0,94090</div>
<div class="t" style="left:885px;top:529px;font-size:11px;line-height:14px;letter-spacing:0.03px;">2069,98</div>
<div class="t" style="left:948px;top:529px;font-size:11px;line-height:14px;letter-spacing:0.12px;">476,10 (23%)</div>
<div class="t" style="left:1065px;top:529px;font-size:11px;line-height:14px;letter-spacing:0.03px;">2546,08</div>
<div class="t" style="left:1128px;top:529px;font-size:11px;line-height:14px;letter-spacing:0.48px;">62,10 (3%)</div>
<div class="t" style="left:390px;top:546px;font-size:11px;line-height:14px;">2</div>
<div class="t" style="left:420px;top:546px;font-size:11px;line-height:14px;transform:scaleX(0.900);transform-origin:0 0;">GRUSZKI</div>
<div class="t" style="left:703px;top:546px;font-size:11px;line-height:14px;letter-spacing:0.90px;">kg</div>
<div class="t" style="left:745px;top:546px;font-size:11px;line-height:14px;letter-spacing:0.03px;">1000,00</div>
<div class="t" style="left:815px;top:546px;font-size:11px;line-height:14px;letter-spacing:0.03px;">1,20540</div>
<div class="t" style="left:885px;top:546px;font-size:11px;line-height:14px;letter-spacing:0.03px;">1205,40</div>
<div class="t" style="left:947px;top:546px;font-size:11px;line-height:14px;letter-spacing:0.21px;">277,24 (23%)</div>
<div class="t" style="left:1065px;top:546px;font-size:11px;line-height:14px;letter-spacing:0.03px;">1482,64</div>
<div class="t" style="left:1128px;top:546px;font-size:11px;line-height:14px;letter-spacing:0.59px;">24,11 (2%)</div>
<div class="t" style="left:390px;top:563px;font-size:11px;line-height:14px;">3</div>
<div class="t" style="left:419px;top:563px;font-size:11px;line-height:14px;letter-spacing:-0.14px;">ŚLIWKI</div>
<div class="t" style="left:703px;top:563px;font-size:11px;line-height:14px;letter-spacing:0.90px;">kg</div>
<div class="t" style="left:745px;top:563px;font-size:11px;line-height:14px;letter-spacing:0.03px;">1700,00</div>
<div class="t" style="left:815px;top:563px;font-size:11px;line-height:14px;letter-spacing:0.03px;">1,67200</div>
<div class="t" style="left:885px;top:563px;font-size:11px;line-height:14px;letter-spacing:0.03px;">2842,40</div>
<div class="t" style="left:947px;top:563px;font-size:11px;line-height:14px;letter-spacing:0.21px;">653,75 (23%)</div>
<div class="t" style="left:1065px;top:563px;font-size:11px;line-height:14px;letter-spacing:0.03px;">3496,15</div>
<div class="t" style="left:1124px;top:563px;font-size:11px;line-height:14px;letter-spacing:0.29px;">142,12 (5%)</div>
</body>
</html>
